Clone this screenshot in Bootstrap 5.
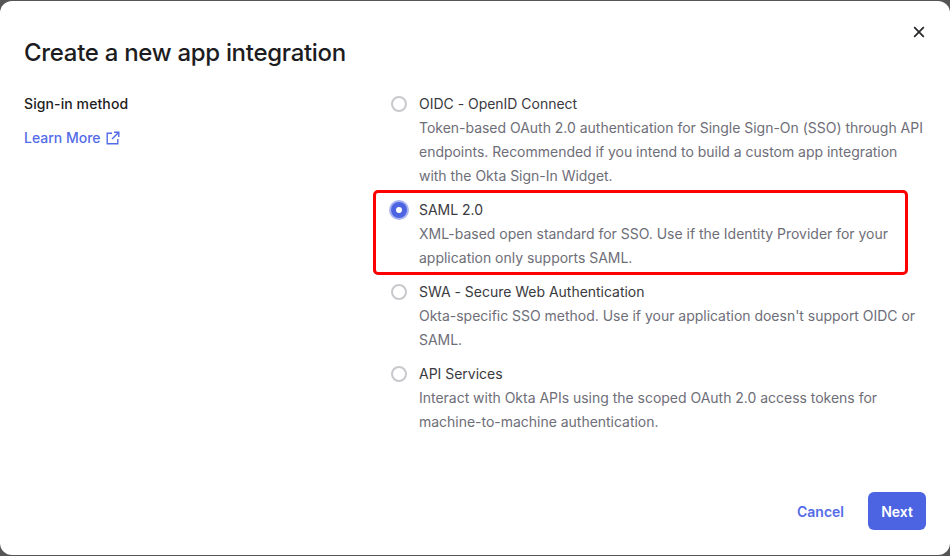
<!DOCTYPE html>
<html lang="en">
<head>
<meta charset="utf-8">
<title>Create a new app integration</title>
<link href="https://cdn.jsdelivr.net/npm/bootstrap@5.3.0/dist/css/bootstrap.min.css" rel="stylesheet">
<style>
html,body{height:100%;}
body{margin:0;background:#555;font-family:Inter,"Liberation Sans",sans-serif;overflow:hidden;color:#1d1d21;}
.dlg{width:950px;height:554px;margin-top:1px;background:#fff;border-radius:12px;position:relative;}
.dlg-head{padding:37px 24px 0;}
.dlg-title{font-size:24px;line-height:30px;font-weight:500;margin:0;color:#1d1d21;letter-spacing:-.3px;}
.close-x{position:absolute;left:912px;top:24px;width:14px;height:14px;background:none;border:0;padding:0;display:block;line-height:0;}
.close-x svg{display:block;}
.dlg-body{padding-top:24px;padding-left:24px;}
.left-col{width:367px;flex:none;}
.lbl{font-size:14px;line-height:24px;font-weight:500;color:#1d1d21;letter-spacing:.1px;}
.learn{display:inline-flex;align-items:center;gap:5px;font-size:14px;line-height:24px;font-weight:500;color:#546be7;text-decoration:none;margin-top:10px;}
.opts{width:534px;flex:none;}
.opt{display:flex;}
.opt+.opt{margin-top:10px;}
.dot{width:16px;height:16px;border-radius:50%;border:2px solid #c9c9cd;background:#fff;flex:none;margin-top:4px;margin-right:12px;}
.opt.on .dot{border:0;width:16px;height:16px;box-shadow:0 0 0 2px #a9b4f1;position:relative;background:#4c64e1;}
.opt.on .dot::after{content:"";position:absolute;left:5px;top:5px;width:6px;height:6px;border-radius:50%;background:#fff;}
.opt-name{font-size:14px;line-height:24px;color:#3a3a40;letter-spacing:-.02px;}
.opt-desc{font-size:14px;line-height:24px;color:#6e6e78;letter-spacing:-.02px;}
.hilite{position:absolute;left:373px;top:189px;width:535px;height:85px;border:3px solid #f00;border-radius:5px;pointer-events:none;}
.dlg-foot{position:absolute;left:0;right:24px;bottom:25px;gap:8px;}
.btn-plain{color:#546be7;font-size:14px;font-weight:600;padding:0 16px;height:38px;border:0;background:none;}
.btn-next{background:#4c64e1;color:#fff;font-size:14px;font-weight:600;width:58px;height:38px;padding:0;border:0;border-radius:6px;}
.btn-next:hover{background:#4c64e1;color:#fff;}
</style>
</head>
<body>
<div class="dlg">
  <button class="close-x" type="button" aria-label="Close">
    <svg width="14" height="14" viewBox="0 0 14 14"><path d="M2.2 2.2 11.8 11.8M11.8 2.2 2.2 11.8" stroke="#26262b" stroke-width="1.7" fill="none"/></svg>
  </button>
  <div class="dlg-head"><h1 class="dlg-title">Create a new app integration</h1></div>
  <div class="dlg-body d-flex">
    <div class="left-col">
      <div class="lbl">Sign-in method</div>
      <a class="learn" href="#">Learn More
        <svg width="14" height="14" viewBox="0 0 14 14" fill="none" stroke="#546be7" stroke-width="1.4"><path d="M6 2.2H1.2V12.8H11.8V8"/><path d="M8 1.2H12.8V6M12.6 1.4 6 8"/></svg>
      </a>
    </div>
    <div class="opts">
      <div class="opt"><span class="dot"></span><div><div class="opt-name">OIDC - OpenID Connect</div><div class="opt-desc">Token-based OAuth 2.0 authentication for Single Sign-On (SSO) through API endpoints. Recommended if you intend to build a custom app integration with the Okta Sign-In Widget.</div></div></div>
      <div class="opt on"><span class="dot"></span><div><div class="opt-name">SAML 2.0</div><div class="opt-desc">XML-based open standard for SSO. Use if the Identity Provider for your application only supports SAML.</div></div></div>
      <div class="opt"><span class="dot"></span><div><div class="opt-name">SWA - Secure Web Authentication</div><div class="opt-desc">Okta-specific SSO method. Use if your application doesn't support OIDC or SAML.</div></div></div>
      <div class="opt"><span class="dot"></span><div><div class="opt-name">API Services</div><div class="opt-desc">Interact with Okta APIs using the scoped OAuth 2.0 access tokens for machine-to-machine authentication.</div></div></div>
    </div>
  </div>
  <div class="hilite"></div>
  <div class="dlg-foot d-flex justify-content-end align-items-center">
    <button class="btn btn-plain" type="button">Cancel</button>
    <button class="btn btn-next" type="button">Next</button>
  </div>
</div>
<script src="https://cdn.jsdelivr.net/npm/bootstrap@5.3.0/dist/js/bootstrap.bundle.min.js"></script>
</body>
</html>
